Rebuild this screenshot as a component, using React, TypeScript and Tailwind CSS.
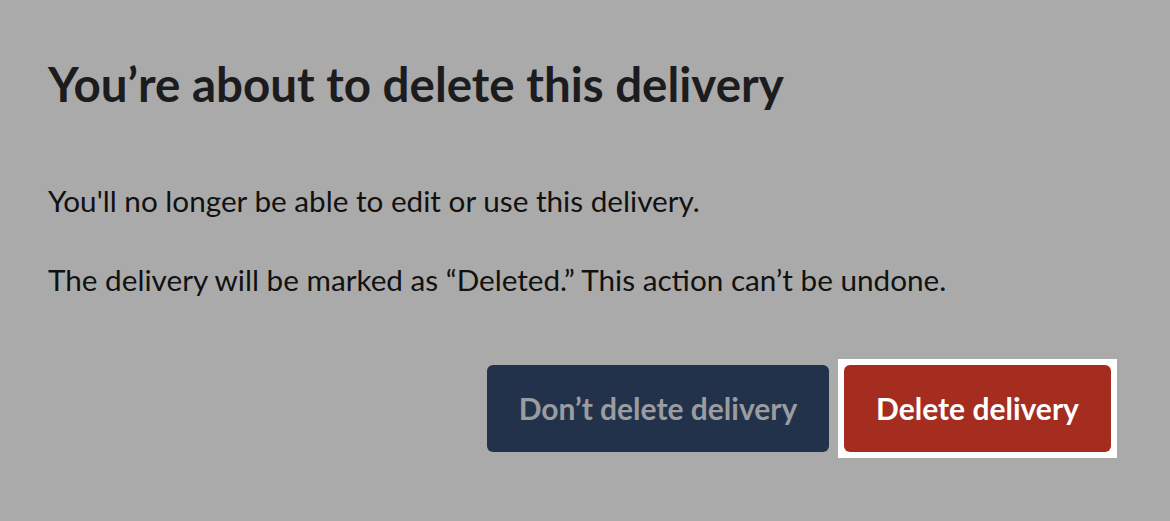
import React from "react";

function App() {
  return (
    <div className="w-[1170px] h-[521px] bg-[#aaaaaa] font-['Lato',sans-serif] px-12 pt-[52px]">
      <h1 className="text-[47.5px] leading-[64px] font-bold text-[#1c1c1e]">
        You’re about to delete this delivery
      </h1>
      <div className="mt-[67px] flex flex-col gap-[43px] text-[29.7px] leading-[36px] text-[#111]">
        <p>You'll no longer be able to edit or use this delivery.</p>
        <p>The delivery will be marked as “Deleted.” This action can’t be undone.</p>
      </div>
      <div className="mt-[61px] flex items-center justify-end gap-[9px] mr-[5px]">
        <button className="h-[87px] w-[342px] rounded-md bg-[#22324b] text-[30px] font-bold text-[#9a9ca0]">
          Don’t delete delivery
        </button>
        <div className="bg-white p-[6px]">
          <button className="h-[87px] w-[267px] rounded-md bg-[#a52d20] text-[30px] font-bold text-white">
            Delete delivery
          </button>
        </div>
      </div>
    </div>
  );
}

export default App;
